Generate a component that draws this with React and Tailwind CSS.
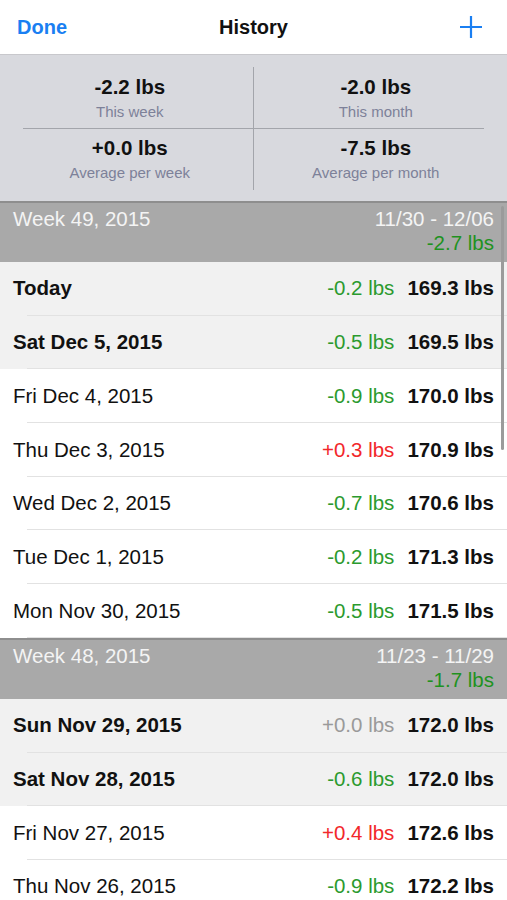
import React from "react";

const weeks = [
  {
    title: "Week 49, 2015",
    range: "11/30 - 12/06",
    change: "-2.7 lbs",
    rows: [
      { date: "Today", diff: "-0.2 lbs", kind: "down", weight: "169.3 lbs", bold: true },
      { date: "Sat Dec 5, 2015", diff: "-0.5 lbs", kind: "down", weight: "169.5 lbs", bold: true },
      { date: "Fri Dec 4, 2015", diff: "-0.9 lbs", kind: "down", weight: "170.0 lbs" },
      { date: "Thu Dec 3, 2015", diff: "+0.3 lbs", kind: "up", weight: "170.9 lbs" },
      { date: "Wed Dec 2, 2015", diff: "-0.7 lbs", kind: "down", weight: "170.6 lbs" },
      { date: "Tue Dec 1, 2015", diff: "-0.2 lbs", kind: "down", weight: "171.3 lbs" },
      { date: "Mon Nov 30, 2015", diff: "-0.5 lbs", kind: "down", weight: "171.5 lbs" },
    ],
  },
  {
    title: "Week 48, 2015",
    range: "11/23 - 11/29",
    change: "-1.7 lbs",
    rows: [
      { date: "Sun Nov 29, 2015", diff: "+0.0 lbs", kind: "flat", weight: "172.0 lbs", bold: true },
      { date: "Sat Nov 28, 2015", diff: "-0.6 lbs", kind: "down", weight: "172.0 lbs", bold: true },
      { date: "Fri Nov 27, 2015", diff: "+0.4 lbs", kind: "up", weight: "172.6 lbs" },
      { date: "Thu Nov 26, 2015", diff: "-0.9 lbs", kind: "down", weight: "172.2 lbs" },
    ],
  },
];

const diffColor = {
  down: "text-[#2b9a2e]",
  up: "text-[#f2282b]",
  flat: "text-[#9a9a9a]",
};

const Stat = ({ value, label }) => (
  <div className="flex flex-col items-center">
    <span className="text-[20.5px] font-bold text-[#111] leading-[24px]">{value}</span>
    <span className="text-[15px] text-[#7d8199] leading-[20px] mt-[3px]">{label}</span>
  </div>
);

const Row = ({ row }) => (
  <div className={`h-[53.7px] flex items-center pl-[13px] pr-[13px] relative ${row.bold ? "bg-[#f1f1f1]" : "bg-white"}`}>
    <span className={`text-[20.5px] text-[#111] ${row.bold ? "font-bold" : ""}`}>{row.date}</span>
    <span className={`ml-auto text-[20.5px] ${diffColor[row.kind]}`}>{row.diff}</span>
    <span className="ml-[13px] text-[20.5px] font-bold text-[#111]">{row.weight}</span>
    <div className="absolute left-[27px] right-0 bottom-0 h-px bg-[#e2e2e2]" />
  </div>
);

export default function App() {
  return (
    <div className="w-[507px] h-[900px] overflow-hidden bg-white relative" style={{ fontFamily: '"Liberation Sans", Arial, sans-serif' }}>
      {/* Nav bar */}
      <div className="h-[54px] flex items-center pl-[17px] pr-[15px] relative">
        <span className="text-[20px] font-bold text-[#1a7ff2]">Done</span>
        <span className="absolute left-0 right-0 text-center text-[20px] font-bold text-[#111] pointer-events-none">History</span>
        <svg className="ml-auto mr-[10px]" width="22" height="22" viewBox="0 0 22 22">
          <path d="M11 0v22M0 11h22" stroke="#1a7ff2" strokeWidth="2.2" />
        </svg>
      </div>

      {/* Stats */}
      <div className="h-[147px] bg-[#d8d9de] border-t border-[#c8c8cc] px-[23px] pt-[12px] pb-[11px] grid grid-cols-2 grid-rows-2">
        <div className="border-r border-b border-[#a3a5ab] flex items-center justify-center pt-[3px] pr-[16px]">
          <Stat value="-2.2 lbs" label="This week" />
        </div>
        <div className="border-b border-[#a3a5ab] flex items-center justify-center pt-[3px] pl-[14px]">
          <Stat value="-2.0 lbs" label="This month" />
        </div>
        <div className="border-r border-[#a3a5ab] flex items-center justify-center pt-[1px] pr-[16px]">
          <Stat value="+0.0 lbs" label="Average per week" />
        </div>
        <div className="flex items-center justify-center pt-[1px] pl-[14px]">
          <Stat value="-7.5 lbs" label="Average per month" />
        </div>
      </div>

      {weeks.map((w) => (
        <div key={w.title}>
          <div className="h-[61px] bg-[#a9a9a9] border-t-2 border-[#8e8e8e] flex justify-between px-[13px] pt-[4px]">
            <span className="text-[20.5px] text-[#f4f4f4] leading-[24px]">{w.title}</span>
            <div className="flex flex-col items-end">
              <span className="text-[20.5px] text-[#f4f4f4] leading-[24px]">{w.range}</span>
              <span className="text-[20.5px] text-[#1f921f] leading-[24px]">{w.change}</span>
            </div>
          </div>
          {w.rows.map((r) => (
            <Row key={r.date} row={r} />
          ))}
        </div>
      ))}

      {/* scroll indicator */}
      <div className="absolute left-[501px] top-[206px] w-[3px] h-[244px] rounded-full bg-[#9b9b9b]" />
    </div>
  );
}
